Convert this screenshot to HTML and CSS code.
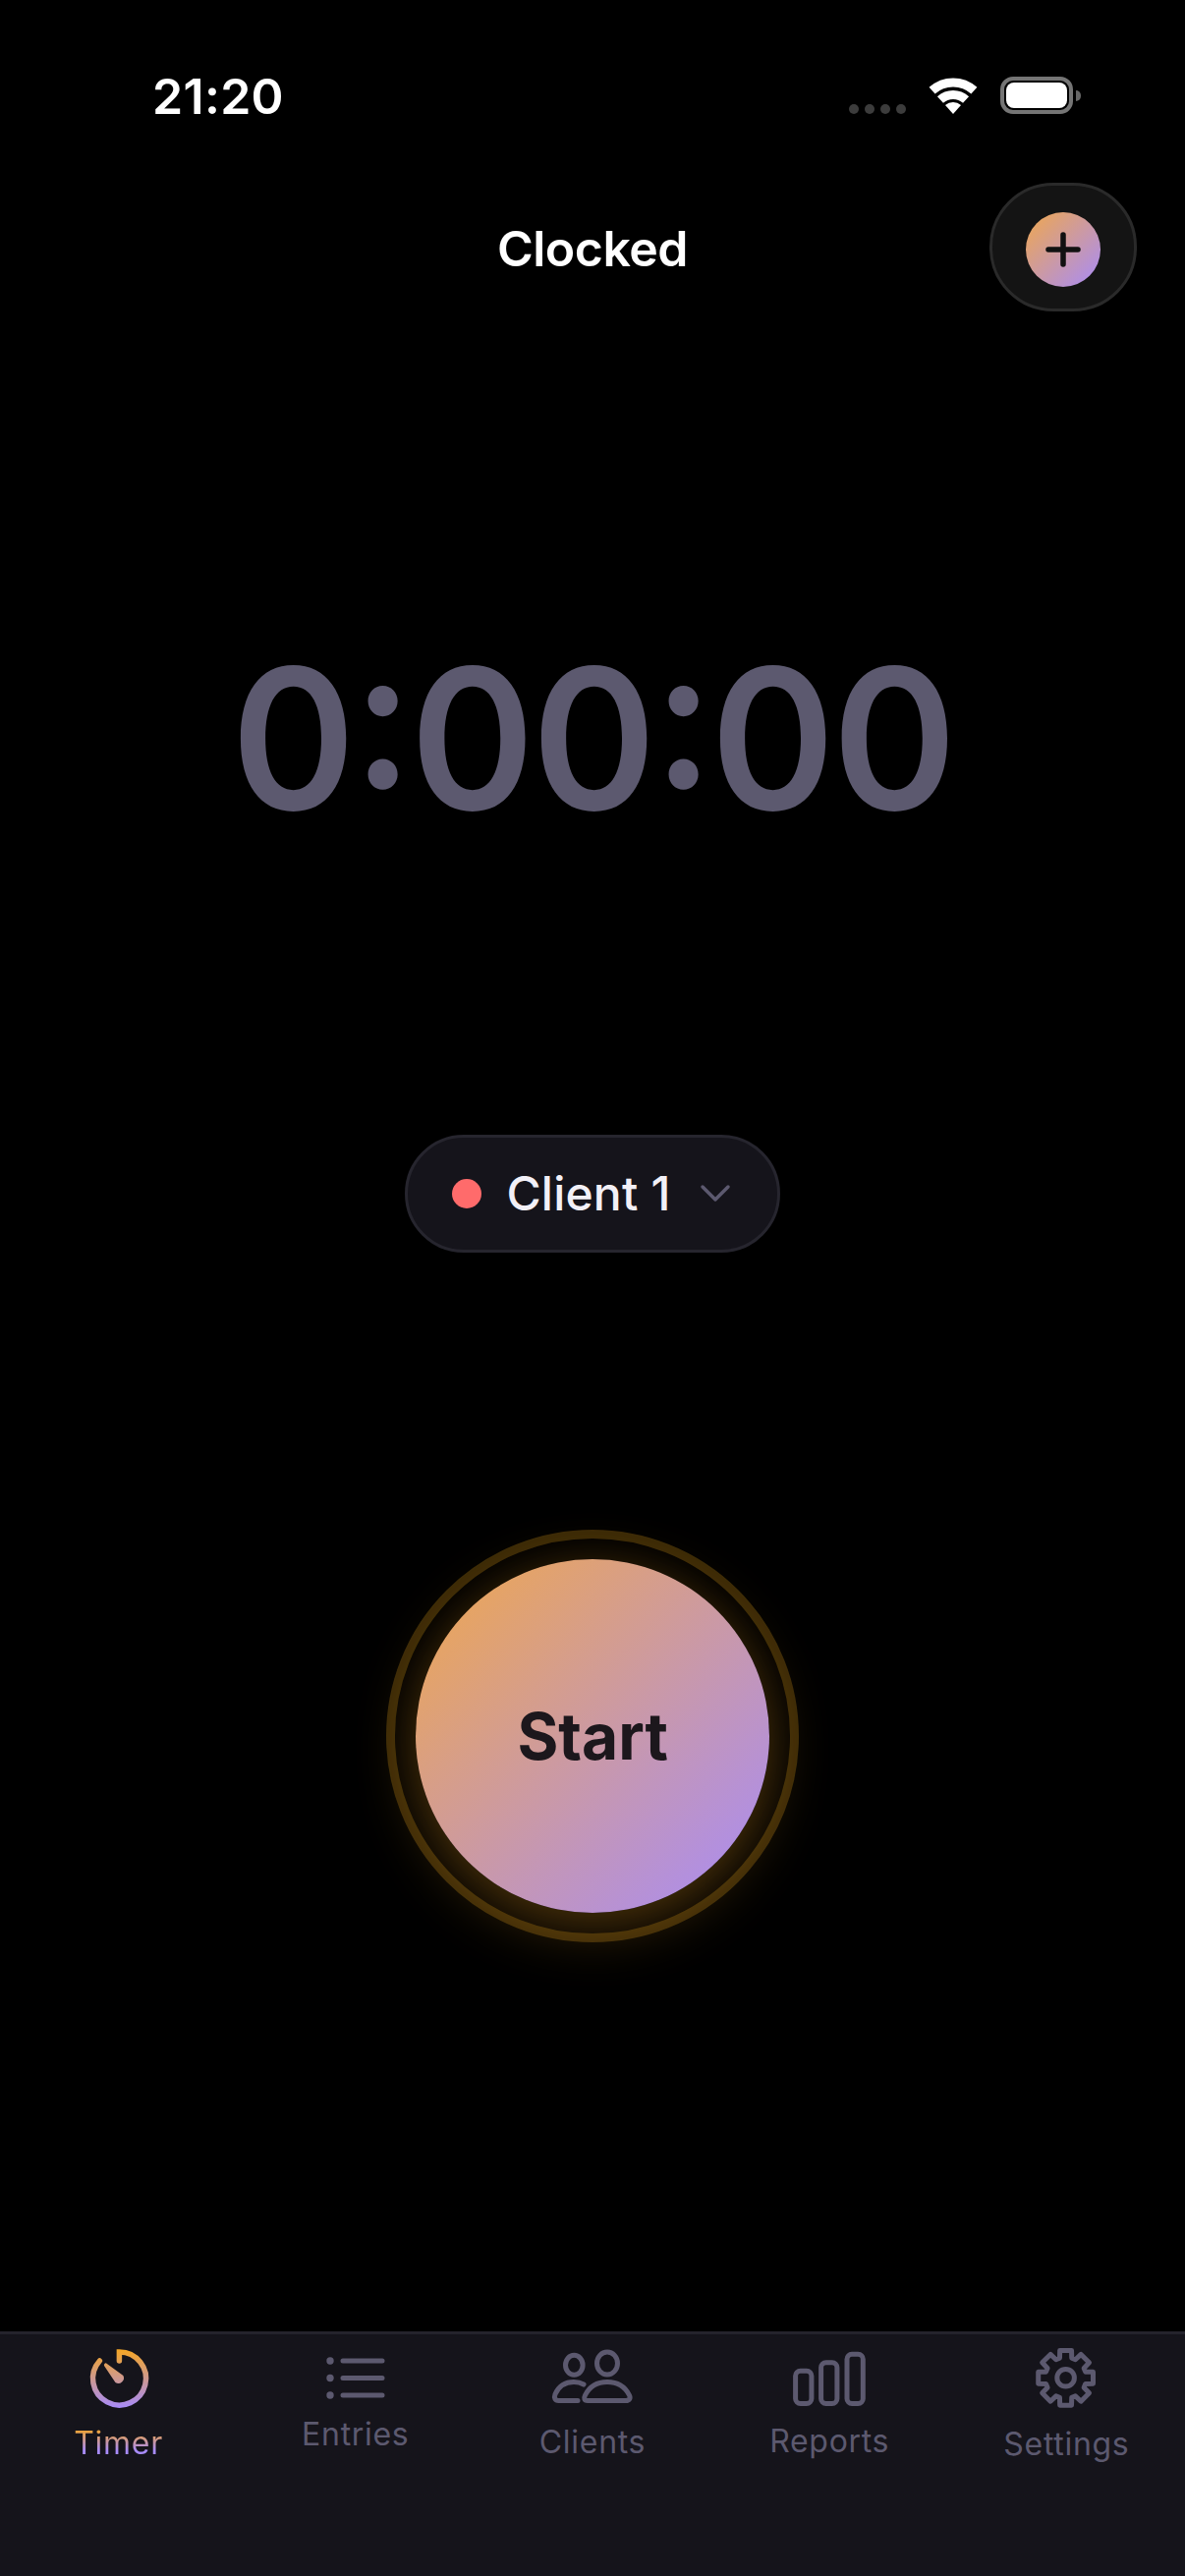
FILE: index.html
```html
<!DOCTYPE html>
<html lang="en">
<head>
<meta charset="utf-8">
<title>Clocked</title>
<link rel="stylesheet" href="styles.css">
</head>
<body>
<div class="app">
  <div class="status">
    <span class="time">21:20</span>
    <div class="status-right">
      <div class="signal"><i></i><i></i><i></i><i></i></div>
      <svg class="wifi" width="56" height="44" viewBox="0 0 56 44">
        <path class="wifi-arc" d="M6.6 16.2A32 32 0 0 1 49.4 16.2"/>
        <path class="wifi-arc" d="M14.95 25.5A19.5 19.5 0 0 1 41.05 25.5"/>
        <path class="wifi-dot" d="M28 40L20 31.1A12 12 0 0 1 36 31.1Z"/>
      </svg>
      <div class="battery"><div class="battery-fill"></div></div>
      <div class="battery-nib"></div>
    </div>
  </div>

  <header class="header">
    <h1 class="title">Clocked</h1>
    <button class="add-btn" type="button">
      <span class="add-inner">
        <svg width="40" height="40" viewBox="0 0 40 40"><path class="plus" d="M20 5V35M5 20H35"/></svg>
      </span>
    </button>
  </header>

  <main class="main">
    <div class="clock">0:00:00</div>
    <button class="client" type="button">
      <span class="client-dot"></span>
      <span class="client-name">Client 1</span>
      <svg class="chev" width="32" height="20" viewBox="0 0 32 20"><path d="M3 3L16 16L29 3"/></svg>
    </button>
    <div class="ring">
      <button class="start" type="button"><span class="start-label">Start</span></button>
    </div>
  </main>

  <nav class="tabs">
    <div class="tab tab-active">
      <svg class="tab-icon" width="110" height="81" viewBox="0 0 110 81">
        <defs>
          <linearGradient id="tg" gradientUnits="userSpaceOnUse" x1="0" y1="5" x2="0" y2="65">
            <stop offset="0" stop-color="#f5a623"/>
            <stop offset="1" stop-color="#a78bfa"/>
          </linearGradient>
        </defs>
        <g transform="translate(.4 0)">
          <path class="timer-ring" d="M55 17V8A27 27 0 1 1 35 17"/>
          <path class="timer-needle" d="M40.5 19.5Q41.5 19 42.5 20L59 32A5.5 5.5 0 0 1 51 39L39.6 22Q39 20.5 40.5 19.5Z"/>
        </g>
      </svg>
      <span class="tab-label">Timer</span>
    </div>
    <div class="tab">
      <svg class="tab-icon" width="110" height="72" viewBox="0 0 110 72">
        <path class="ico" d="M42 17H82M42 34.5H82M42 52H82"/>
        <circle class="ico-fill" cx="29" cy="17" r="3.7"/>
        <circle class="ico-fill" cx="29" cy="34.5" r="3.7"/>
        <circle class="ico-fill" cx="29" cy="52" r="3.7"/>
      </svg>
      <span class="tab-label">Entries</span>
    </div>
    <div class="tab">
      <svg class="tab-icon" width="110" height="80" viewBox="0 0 110 80">
        <g transform="translate(2 -6)">
          <ellipse class="ico" cx="34.3" cy="27.3" rx="8.8" ry="10"/>
          <ellipse class="ico" cx="68" cy="25.5" rx="10.5" ry="11.5"/>
          <path class="ico" d="M48 63.5H87C90.5 63.5 92 61 90.5 58C86 49 78 44.5 68 44.5C58 44.5 50 49 45.5 58C44 61 44.5 63.5 48 63.5Z"/>
          <path class="ico" d="M44 47C41.5 45.5 38 44.5 34 44.5C25 44.5 18.5 49 15 57C13.5 61 15 63.5 18.5 63.5H38"/>
        </g>
      </svg>
      <span class="tab-label">Clients</span>
    </div>
    <div class="tab">
      <svg class="tab-icon" width="110" height="79" viewBox="0 0 110 79">
        <g transform="translate(.8 -6)">
          <rect class="ico" x="19.8" y="33.2" width="16.3" height="33.3" rx="5"/>
          <rect class="ico" x="45.8" y="24.8" width="16.3" height="41.7" rx="5"/>
          <rect class="ico" x="72.2" y="16.2" width="16.3" height="50.3" rx="5"/>
        </g>
      </svg>
      <span class="tab-label">Reports</span>
    </div>
    <div class="tab">
      <svg class="tab-icon" width="110" height="82" viewBox="0 0 110 82">
        <g transform="translate(54.6 34.3)">
          <path class="ico" d="M-6.14 -20.08L-5.93 -27.88L5.93 -27.88L6.14 -20.08L9.86 -18.54L15.52 -23.9L23.9 -15.52L18.54 -9.86L20.08 -6.14L27.88 -5.93L27.88 5.93L20.08 6.14L18.54 9.86L23.9 15.52L15.52 23.9L9.86 18.54L6.14 20.08L5.93 27.88L-5.93 27.88L-6.14 20.08L-9.86 18.54L-15.52 23.9L-23.9 15.52L-18.54 9.86L-20.08 6.14L-27.88 5.93L-27.88 -5.93L-20.08 -6.14L-18.54 -9.86L-23.9 -15.52L-15.52 -23.9L-9.86 -18.54Z"/>
          <circle class="ico" r="8.8"/>
        </g>
      </svg>
      <span class="tab-label">Settings</span>
    </div>
  </nav>
</div>
</body>
</html>
```
FILE: styles.css
```css
* { box-sizing: border-box; }
html, body { margin: 0; padding: 0; background: #000; }
body { font-family: Inter, "Liberation Sans", sans-serif; }
button { font-family: inherit; cursor: pointer; }

.app {
  width: 1206px;
  height: 2622px;
  display: flex;
  flex-direction: column;
  overflow: hidden;
  background: #000;
}

/* status bar */
.status {
  height: 186px;
  flex: none;
  display: flex;
  align-items: flex-start;
  justify-content: space-between;
  padding: 68px 106px 0 155px;
}
.time {
  color: #fff;
  font-size: 50px;
  font-weight: 600;
  line-height: 60px;
  letter-spacing: 0.3px;
}
.status-right {
  display: flex;
  align-items: flex-start;
  margin-top: 10px;
}
.signal {
  display: flex;
  gap: 6px;
  margin-top: 28px;
  margin-right: 20px;
}
.signal i {
  width: 10px;
  height: 10px;
  border-radius: 50%;
  background: #3c3c3c;
}
.wifi { margin-top: -2px; margin-right: 20px; }
.wifi-arc { fill: none; stroke: #fff; stroke-width: 9; }
.wifi-dot { fill: #fff; }
.battery {
  width: 74px;
  height: 38px;
  border: 4px solid #757575;
  border-radius: 13px;
  padding: 2px;
}
.battery-fill {
  height: 100%;
  background: #fff;
  border-radius: 8px;
}
.battery-nib {
  width: 5px;
  height: 11px;
  margin: 14px 0 0 3px;
  background: #666;
  border-radius: 0 5px 5px 0;
}

/* header */
.header {
  height: 130px;
  flex: none;
  display: grid;
  grid-template-columns: 1fr auto 1fr;
  align-items: center;
  padding: 0 49px;
}
.title {
  grid-column: 2;
  margin: 3px 0 0;
  color: #fff;
  font-size: 50px;
  font-weight: 600;
  line-height: 60px;
  letter-spacing: -0.5px;
}
.add-btn {
  grid-column: 3;
  justify-self: end;
  width: 150px;
  height: 131px;
  padding: 4px 0 0;
  display: flex;
  align-items: center;
  justify-content: center;
  background: #141414;
  border: 3px solid #2a2a2a;
  border-radius: 65px;
}
.add-inner {
  width: 76px;
  height: 76px;
  border-radius: 50%;
  display: flex;
  align-items: center;
  justify-content: center;
  background: linear-gradient(135deg, #f0a84c, #a78bfa);
}
.plus { fill: none; stroke: #111; stroke-width: 5.5; stroke-linecap: round; }

/* main */
.main {
  display: flex;
  flex-direction: column;
  align-items: center;
}
.clock {
  margin-top: 315px;
  height: 240px;
  color: #5c596f;
  font-size: 200px;
  font-weight: 600;
  line-height: 240px;
  letter-spacing: -3px;
  font-feature-settings: "case", "calt";
  transform: scaleX(0.96);
}
.client {
  margin-top: 284px;
  height: 120px;
  padding: 0 47px 0 45px;
  display: flex;
  align-items: center;
  background: #15141b;
  border: 3px solid #26252e;
  border-radius: 60px;
}
.client-dot {
  width: 30px;
  height: 30px;
  border-radius: 50%;
  background: #ff6b6b;
}
.client-name {
  margin-left: 25px;
  color: #f2f0f7;
  font-size: 48px;
  font-weight: 500;
  line-height: 58px;
  letter-spacing: 0.2px;
}
.chev { margin-left: 29px; }
.chev path { fill: none; stroke: #5c596f; stroke-width: 3.5; stroke-linecap: round; stroke-linejoin: round; }

.ring {
  margin-top: 282px;
  width: 420px;
  height: 420px;
  border: 9px solid #3a2907;
  border-radius: 50%;
  display: flex;
  align-items: center;
  justify-content: center;
}
.start {
  width: 360px;
  height: 360px;
  flex: none;
  padding: 0;
  border: 0;
  border-radius: 50%;
  background: linear-gradient(135deg, #f0a84c, #a78bfa);
  box-shadow: 0 14px 60px rgba(245, 166, 35, 0.3), 0 0 40px rgba(245, 166, 35, 0.06);
  color: #1c171c;
  font-size: 66px;
  font-weight: 700;
}
.start-label {
  display: inline-block;
  transform: scaleX(0.97);
}

/* tab bar */
.tabs {
  margin-top: auto;
  height: 249px;
  flex: none;
  display: grid;
  grid-template-columns: repeat(5, 1fr);
  background: #15141b;
  border-top: 3px solid #24232c;
}
.tab {
  display: flex;
  flex-direction: column;
  align-items: center;
  padding-top: 10px;
}
.tab-icon { display: block; flex: none; }
.tab-label {
  margin-top: 1px;
  color: #5c596f;
  font-size: 32px;
  font-weight: 400;
  line-height: 38px;
  letter-spacing: 0.7px;
}
.tab-active .tab-label {
  background: linear-gradient(180deg, #f5a623 10%, #a78bfa 70%);
  -webkit-background-clip: text;
  background-clip: text;
  color: transparent;
}
.ico { fill: none; stroke: #5c596f; stroke-width: 5; stroke-linecap: round; stroke-linejoin: round; }
.ico-fill { fill: #5c596f; }
.timer-ring { fill: none; stroke: url(#tg); stroke-width: 5.5; stroke-linecap: round; }
.timer-needle { fill: url(#tg); }
```
